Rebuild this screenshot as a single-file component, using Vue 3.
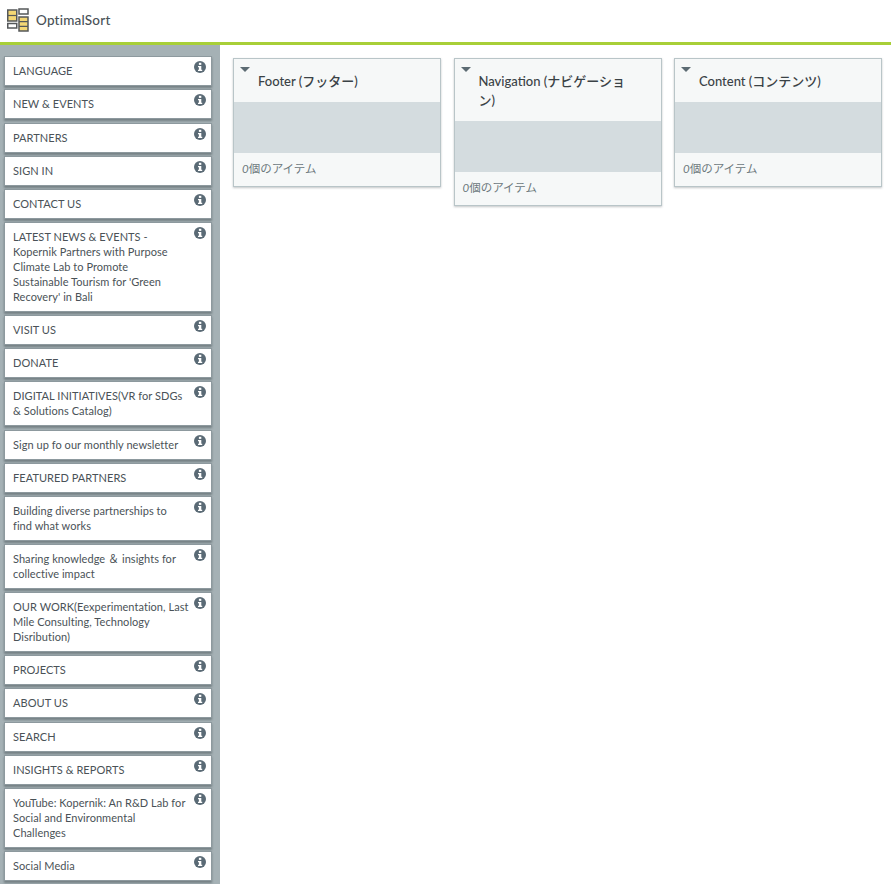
<script setup>
const items = [
  ['LANGUAGE'],['NEW & EVENTS'],['PARTNERS'],['SIGN IN'],['CONTACT US'],
  ['LATEST NEWS & EVENTS -','Kopernik Partners with Purpose','Climate Lab to Promote',"Sustainable Tourism for 'Green","Recovery' in Bali"],
  ['VISIT US'],['DONATE'],['DIGITAL INITIATIVES(VR for SDGs','& Solutions Catalog)'],['Sign up fo our monthly newsletter'],['FEATURED PARTNERS'],
  ['Building diverse partnerships to','find what works'],['Sharing knowledge ＆ insights for','collective impact'],
  ['OUR WORK(Eexperimentation, Last','Mile Consulting, Technology','Disribution)'],['PROJECTS'],['ABOUT US'],['SEARCH'],['INSIGHTS & REPORTS'],
  ['YouTube: Kopernik: An R&D Lab for','Social and Environmental','Challenges'],['Social Media']
]
const cats = [
  { name: 'Footer (フッター)' },
  { name: 'Navigation (ナビゲーション)' },
  { name: 'Content (コンテンツ)' }
]
</script>

<template>
  <div class="page">
    <header class="top">
      <svg class="logo" width="22" height="24" viewBox="0 0 22 24">
        <g stroke="#55585a" stroke-width="1.5">
          <rect x="0.75" y="2" width="9" height="11" fill="#f4d774"/>
          <path d="M.75 7.5h9" stroke-width="1.2"/>
          <rect x="0.75" y="15.5" width="9" height="4.5" fill="#fff"/>
          <rect x="12" y="1" width="9" height="5" fill="#fff"/>
          <rect x="12" y="9" width="9" height="14" fill="#f4d774"/>
          <path d="M12 13.7h9M12 18.3h9" stroke-width="1.2"/>
        </g>
      </svg>
      <span class="brand">OptimalSort</span>
    </header>
    <div class="body">
      <aside class="side">
        <div v-for="t in items" :key="t[0]" class="card">
          <span v-for="l in t" :key="l" class="label">{{ l }}</span>
          <svg class="info" width="12" height="12" viewBox="0 0 12 12">
            <circle cx="6" cy="6" r="6" fill="#5a6a75"/>
            <rect x="4.9" y="1.8" width="2.4" height="2.1" fill="#fff"/>
            <path d="M4 4.9h3.3v3.8h.9v1.3H4V8.7h.9V6.2H4z" fill="#fff"/>
          </svg>
        </div>
      </aside>
      <main class="board">
        <section v-for="c in cats" :key="c.name" class="cat">
          <div class="head">
            <span class="tri"></span>
            <h2 class="title">{{ c.name }}</h2>
          </div>
          <div class="drop"></div>
          <div class="foot"><i>0</i>個のアイテム</div>
        </section>
      </main>
    </div>
  </div>
</template>

<style scoped>
.page { width: 891px; height: 884px; overflow: hidden; display: flex; flex-direction: column; font-family: Lato, "Noto Sans CJK JP", sans-serif; background: #fff; }
.top { height: 42px; flex: none; display: flex; align-items: center; gap: 7px; padding: 0 0 3px 7px; box-sizing: border-box; }
.logo { flex: none; }
.brand { font-size: 13.5px; font-weight: 500; color: #4a5257; letter-spacing: .2px; }
.body { flex: 1; display: flex; border-top: 3px solid #a8cf38; min-height: 0; }
.side { width: 220px; flex: none; box-sizing: border-box; background: #a5b1b5; padding: 11.3px 8px 0 4px; display: flex; flex-direction: column; gap: 3.15px; }
.card { box-sizing: border-box; background: #fff; border: 1px solid #8d999e; box-shadow: 0 2px 2px rgba(60,70,75,.45); padding: 6px 8px 7px; font-size: 11px; letter-spacing: .05px; line-height: 15px; color: #4a5257; position: relative; }
.label { display: block; white-space: nowrap; }
.info { position: absolute; top: 4px; right: 5px; }
.board { flex: 1; display: flex; align-items: flex-start; gap: 12.5px; padding: 13px 9px 0 13px; }
.cat { width: 208px; flex: none; box-sizing: border-box; background: #f6f8f8; border: 1px solid #b9c5c8; box-shadow: 0 1px 2px rgba(80,90,95,.35); }
.head { position: relative; padding: 13px 24px 11px 24px; }
.tri { position: absolute; left: 6px; top: 8px; width: 0; height: 0; border-left: 5px solid transparent; border-right: 5px solid transparent; border-top: 5px solid #5c6b73; }
.title { margin: 0; font-size: 13px; font-weight: 500; line-height: 19px; color: #3a4246; }
.drop { height: 51px; background: #d4dcdf; }
.foot { padding: 8px 8px 9px; font-size: 11.5px; line-height: 16px; color: #6d787d; }
.foot i { font-style: italic; }
</style>

<style>
html, body { margin: 0; }
</style>
